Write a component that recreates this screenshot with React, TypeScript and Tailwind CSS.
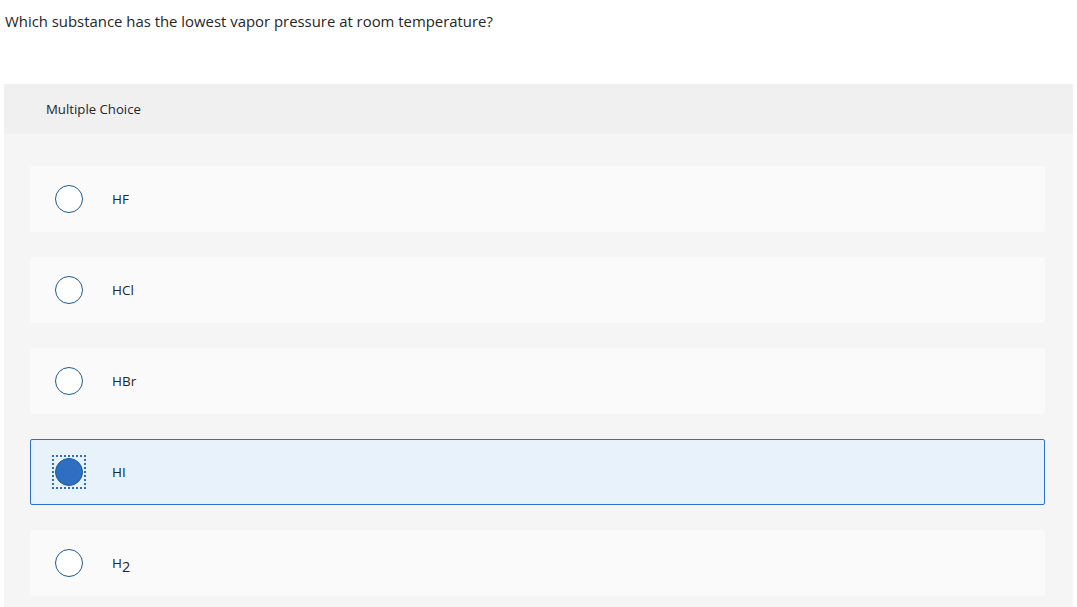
import * as React from "react"

const options = [
  { id: "hf", label: "HF" },
  { id: "hcl", label: "HCl" },
  { id: "hbr", label: "HBr" },
  { id: "hi", label: "HI" },
  { id: "h2", label: "H2" },
]

const Radio = ({ checked }: { checked: boolean }) => {
  if (checked) {
    return (
      <span className="flex h-[34px] w-[34px] items-center justify-center border-2 border-dotted border-[#2f6fc2]">
        <span className="block h-[28px] w-[28px] rounded-full border border-[#1e5aa3] bg-[#2e6fc1]" />
      </span>
    )
  }
  return (
    <span className="flex h-[34px] w-[34px] items-center justify-center">
      <span className="block h-[28px] w-[28px] rounded-full border border-[#1d5a94] bg-white" />
    </span>
  )
}

export default function App() {
  const [selected, setSelected] = React.useState("hi")

  return (
    <div className="min-h-[607px] bg-white font-['Open_Sans','Liberation_Sans',sans-serif] text-[#262626]">
      <p className="pl-[5px] pt-[12px] text-[14.9px] leading-[18px]">
        Which substance has the lowest vapor pressure at room temperature?
      </p>

      <div className="ml-[4px] mr-[4px] mt-[54px] bg-[#f5f5f5] pb-[20px]">
        <div className="flex h-[50px] items-center bg-[#f0f0f0] pl-[42px] pt-[1px] text-[13.2px]">
          Multiple Choice
        </div>

        <div className="flex flex-col gap-[25px] pl-[26px] pr-[28px] pt-[32px]">
          {options.map((o) => {
            const checked = selected === o.id
            return (
              <label
                key={o.id}
                onClick={() => setSelected(o.id)}
                className={
                  checked
                    ? "flex h-[66px] cursor-pointer items-center rounded-[2px] border border-[#2c72c8] bg-[#e8f2fb] pl-[21px]"
                    : "flex h-[66px] cursor-pointer items-center rounded-[2px] border border-transparent bg-[#fafafa] pl-[21px]"
                }
              >
                <Radio checked={checked} />
                <span className="ml-[26px] text-[13.5px]">
                  {o.id === "h2" ? (
                    <>
                      H<span className="relative top-[4px] text-[14.5px]">2</span>
                    </>
                  ) : (
                    o.label
                  )}
                </span>
              </label>
            )
          })}
        </div>
      </div>
    </div>
  )
}
